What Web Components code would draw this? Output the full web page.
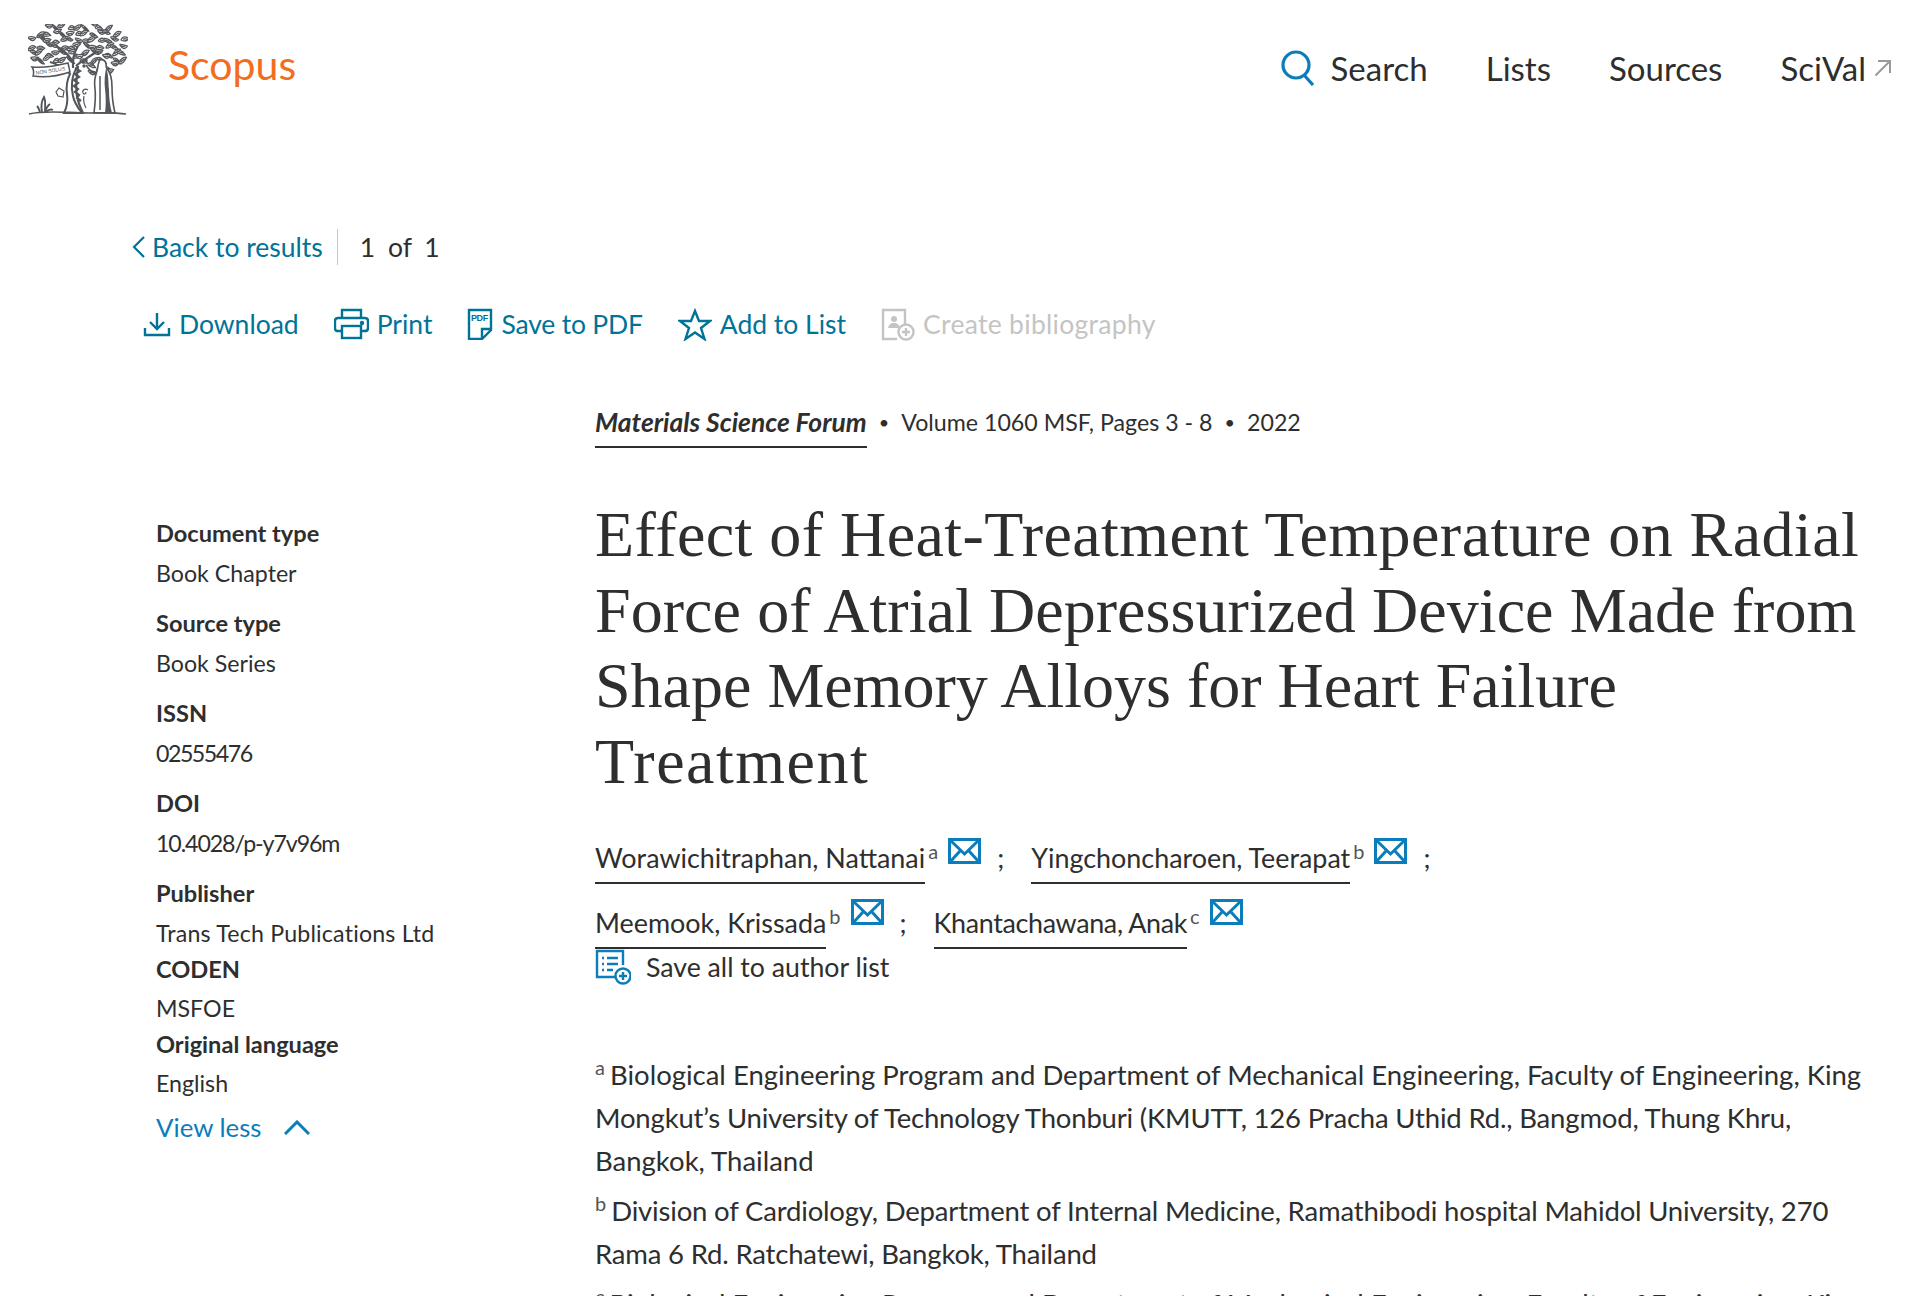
<!DOCTYPE html>
<html lang="en">
<head>
<meta charset="utf-8">
<title>Scopus - Document details</title>
<style>
    html, body { margin: 0; padding: 0; background: #fff; height: 1296px; overflow: hidden; }
    body { font-family: "Lato", "Open Sans", sans-serif; color: #2e2e2e; }
</style>
</head>
<body>
<scopus-page></scopus-page>

<template id="scopus-header-tpl">
    <style>
        :host { display: flex; justify-content: space-between; align-items: flex-start; height: 200px; }
        .brand { display: flex; align-items: flex-start; }
        .tree { width: 100px; height: 92px; margin: 24px 0 0 28px; }
        .name { color: #f36d21; font-size: 41px; line-height: 48px; margin: 41px 0 0 40px; }
        nav { display: flex; gap: 58px; align-items: center; margin: 45px 32px 0 0; font-size: 33px; line-height: 46px; color: #2e2e2e; }
        .item { display: flex; align-items: center; }
        .search svg { width: 36px; height: 36px; margin-right: 15px; }
        .ext { width: 18px; height: 18px; margin-left: 8px; }
    </style>
    <div class="brand">
        <svg class="tree" viewBox="0 0 100 92" fill="none" stroke="#53565a">
            <g class="leaves" stroke-width="1.3"></g>
            <path d="M50 42c-7 9-7 22-5 30 1 6 5 12 9 17H36c3-6 4-12 3-19-1-7 0-14 3-20l-6-6" fill="#fff" stroke-width="2"/>
            <path d="M50 42c-1 10-3 20-1 30 1 6 3 11 6 17M47 44l5 3-5 3 4 3-5 3 4 3-4 3 4 3-3 3 4 3-2 3 4 3" stroke-width="2.2"/>
            <path d="M40 48c-5-4-10-8-18-10M45 44c0-8 0-14 5-22M48 42c5-5 12-8 20-14M46 40c-4-8-10-14-18-18" stroke-width="2.2"/>
            <path d="M4 43c12 1 24-1 36-4l2 9c-12 4-25 6-37 4 1-3 1-6-1-9z" fill="#fff" stroke-width="1.5"/>
            <path d="M72 36c3-1 6 1 6 4 0 2 0 3 1 5 4 4 5 11 5 18 0 9 1 18 3 26H66c1-8 2-16 1-24-1-7 0-13 2-18 1-3 1-9 3-11z" fill="#fff" stroke-width="1.6"/>
            <path d="M78 44c3 7 2 14 3 22 0 8 1 16 3 23h-7c1-8 1-16 0-24-1-8 0-15 1-21z" fill="#53565a" stroke="none"/>
            <path d="M69 50c-4-1-8-4-11-9M72 52v34" stroke-width="1.5"/>
            <circle cx="55" cy="38" r="1.700" fill="#53565a" stroke="none"/>
            <circle cx="58" cy="36" r="1.700" fill="#53565a" stroke="none"/>
            <circle cx="56" cy="42" r="1.700" fill="#53565a" stroke="none"/>
            <path d="M60 66c-3-2-6 0-5 3 1 2 3 1 3-1M56 72c-1 4 0 8 2 12" stroke-width="1.2"/>
            <path d="M31 64l5 3-1 6-5-1-2-4z" fill="#fff" stroke-width="1.2"/>
            <path d="M1 90c8-2 15-2 24-2 10 0 24 1 36 1 12 0 24-1 37 1" stroke-width="1.700"/>
            <path d="M14 88c-1-5-1-10 2-15 2 4 1 10 1 15M17 88c1-3 2-6 5-8M12 88c-1-2-1-4-3-6M18 88c2-2 5-3 7-2" stroke-width="1.9"/>
            <text x="8" y="50.500" font-family="Liberation Sans, sans-serif" font-size="5" fill="#53565a" stroke="none" transform="rotate(-8 8 50)">NON SOLUS</text>
        </svg>
        <div class="name">Scopus</div>
    </div>
    <nav>
        <div class="item search">
            <svg viewBox="0 0 36 36" fill="none" stroke="#0c7dbb" stroke-width="3.2"><circle cx="16" cy="15" r="13"/><path d="M24 25l9 10"/></svg>
            Search
        </div>
        <div class="item">Lists</div>
        <div class="item">Sources</div>
        <div class="item">SciVal<svg class="ext" viewBox="0 0 18 18" fill="none" stroke="#9a9a9a" stroke-width="2"><path d="M1.5 16.500L16 2M4 2h12v12"/></svg></div>
    </nav>
</template>

<template id="scopus-link-tpl">
    <style>
        :host { display: inline-flex; align-items: center; color: #007398; font-size: 26.5px; line-height: 40px; white-space: nowrap; }
        :host([disabled]) { color: #c4c4c4; letter-spacing: 0.3px; }
        ::slotted(svg) { margin-right: 8px; }
    </style>
    <slot name="icon"></slot><slot></slot>
</template>

<template id="scopus-meta-tpl">
    <style>
        :host { display: block; }
        .label { font-weight: 700; font-size: 23.6px; line-height: 30px; color: #2e2e2e; }
        .value { font-size: 23.2px; line-height: 30px; color: #2e2e2e; margin-top: var(--value-gap, 10px); }
    </style>
    <div class="label"><slot name="label"></slot></div>
    <div class="value"><slot></slot></div>
</template>

<template id="scopus-author-tpl">
    <style>
        :host { display: inline-flex; align-items: flex-start; font-size: 26.9px; line-height: 40px; color: #2e2e2e; white-space: nowrap; }
        .name { border-bottom: 2px solid #2e2e2e; padding-bottom: 4px; }
        sup { display: block; font-size: 20px; line-height: 20px; margin: 3px 0 0 3px; color: #555; }
        svg { width: 33px; height: 26px; margin: var(--mail-top, 0px) 0 0 10px; }
        .sep { margin-left: 16px; margin-right: 27px; }
        :host(.last) .sep { display: none; }
    </style>
    <span class="name"><slot></slot></span><sup><slot name="aff"></slot></sup>
    <svg viewBox="0 0 33 26" fill="none" stroke="#0c7dbb" stroke-width="3"><rect x="1.500" y="1.500" width="30" height="23"/><path d="M2 2l14.500 14L31 2M2 24l10-11M31 24L21 13"/></svg>
    <span class="sep">;</span>
</template>

<template id="scopus-affil-tpl">
    <style>
        :host { display: block; font-size: 27.5px; line-height: 43px; color: #2e2e2e; margin-bottom: 7px; }
        sup { font-size: 20px; line-height: 0; vertical-align: 10px; margin-right: 5px; color: #555; }
    </style>
    <sup><slot name="mark"></slot></sup><slot></slot>
</template>

<template id="scopus-page-tpl">
    <style>
        :host { display: block; }
        .crumb { display: flex; align-items: center; padding-left: 132px; height: 40px; margin-top: 27px; }
        .crumb scopus-link { padding-right: 14px; border-right: 1px solid #c8c8c8; height: 36px; line-height: 36px; }
        .crumb svg { margin-right: 6px; }
        .count { font-size: 26.5px; padding-left: 22px; color: #2e2e2e; word-spacing: 6px; }
        .actions { display: flex; gap: 35px; padding-left: 143px; margin-top: 37px; height: 40px; }
        .layout { display: grid; grid-template-columns: 156px 439px 1fr 20px; margin-top: 60px; }
        aside { grid-column: 2; padding-top: 114px; display: flex; flex-direction: column; }
        aside .gap { margin-top: 20px; }
        aside .tight { margin-top: 6px; --value-gap: 9px; }
        main { grid-column: 3; min-width: 0; }
        .source { font-size: 23.2px; line-height: 36px; display: flex; color: #2e2e2e; }
        .source b { font-style: italic; border-bottom: 2px solid #2e2e2e; padding-bottom: 6px; font-size: 26.4px; }
        .dot { margin: 0 12px; font-size: 18px; }
        h1 { font-family: "Liberation Serif", serif; font-weight: 400; font-size: 64px; line-height: 75.5px; color: #2e2e2e; margin: 49px 0 0; }
        h1 span { display: block; white-space: nowrap; }
        .authors { margin-top: 39px; display: flex; flex-wrap: wrap; row-gap: 19px; width: 900px; }
        .second-row { --mail-top: -4px; }
        .save { display: flex; align-items: center; font-size: 26.7px; line-height: 38px; margin-top: -1px; }
        .save svg { width: 36px; height: 36px; margin-right: 15px; }
        .affils { margin-top: 67px; padding-right: 28px; }
        .tighter { letter-spacing: -0.18px; }
        .narrow-1 { letter-spacing: -1.5px; }
        .narrow-2 { letter-spacing: -1.1px; }
        .view { color: #0c7dbb; font-size: 25.8px; line-height: 40px; display: flex; align-items: center; gap: 22px; margin-top: 9px; }
        .view svg { width: 26px; height: 15px; }
    </style>
    <scopus-header></scopus-header>
    <div class="crumb">
        <scopus-link><svg slot="icon" width="14" height="24" viewBox="0 0 14 24" fill="none" stroke="#007398" stroke-width="2.2"><path d="M12 2L2 12l10 10"/></svg>Back to results</scopus-link>
        <span class="count">1 of 1</span>
    </div>
    <div class="actions">
        <scopus-link><svg slot="icon" width="28" height="26" viewBox="0 0 28 26" fill="none" stroke="#007398" stroke-width="2.4"><path d="M14 2v15M7 11l7 7 7-7M2 17v7h24v-7"/></svg>Download</scopus-link>
        <scopus-link><svg slot="icon" width="35" height="32" viewBox="0 0 35 32" fill="none" stroke="#007398" stroke-width="2.4"><path d="M8 10V2h19v8M7 23H4c-2 0-3-1-3-3v-7c0-2 1-3 3-3h27c2 0 3 1 3 3v7c0 2-1 3-3 3h-3"/><rect x="8" y="18" width="19" height="12"/><circle cx="28" cy="15" r="1" fill="#007398"/></svg>Print</scopus-link>
        <scopus-link style="letter-spacing:-.2px"><svg slot="icon" width="26" height="32" viewBox="0 0 26 32" fill="none" stroke="#007398" stroke-width="2.4"><path d="M2 31V2h22v20l-9 9H2zM15 30v-9h8"/><text x="4" y="13" font-family="Liberation Sans, sans-serif" font-size="9" font-weight="700" letter-spacing="-.4" fill="#007398" stroke="none">PDF</text></svg>Save to PDF</scopus-link>
        <scopus-link><svg slot="icon" width="34" height="33" viewBox="0 0 34 33" fill="none" stroke="#007398" stroke-width="2.4"><path d="M17 3l4 10h11l-9 7 3.500 11L17 24.500 7.500 31 11 20l-9-7h11z"/></svg>Add to List</scopus-link>
        <scopus-link disabled><svg slot="icon" width="34" height="33" viewBox="0 0 34 33" fill="none" stroke="#c4c4c4" stroke-width="2.4"><path d="M16 31H2V2h22v15"/><circle cx="13" cy="11" r="3" fill="#c4c4c4" stroke="none"/><path d="M7 20c1-4 3-5 6-5s5 1 6 5z" fill="#c4c4c4" stroke="none"/><circle cx="25" cy="24" r="7.500"/><path d="M25 20v8M21 24h8"/></svg>Create bibliography</scopus-link>
    </div>
    <div class="layout">
        <aside>
            <scopus-meta><span slot="label">Document type</span>Book Chapter</scopus-meta>
            <scopus-meta class="gap"><span slot="label">Source type</span>Book Series</scopus-meta>
            <scopus-meta class="gap"><span slot="label">ISSN</span><span class="narrow-1">02555476</span></scopus-meta>
            <scopus-meta class="gap"><span slot="label">DOI</span><span class="narrow-2">10.4028/p-y7v96m</span></scopus-meta>
            <scopus-meta class="gap"><span slot="label">Publisher</span><span style="letter-spacing:.18px">Trans Tech Publications Ltd</span></scopus-meta>
            <scopus-meta class="tight"><span slot="label">CODEN</span>MSFOE</scopus-meta>
            <scopus-meta class="tight"><span slot="label">Original language</span>English</scopus-meta>
            <div class="view">View less <svg viewBox="0 0 26 15" fill="none" stroke="#0c7dbb" stroke-width="3"><path d="M1 14L13 2l12 12"/></svg></div>
        </aside>
        <main>
            <div class="source"><b>Materials Science Forum</b><span class="dot">•</span>Volume 1060 MSF, Pages 3 - 8<span class="dot">•</span>2022</div>
            <h1><span style="letter-spacing:.45px">Effect of Heat-Treatment Temperature on Radial</span> <span style="letter-spacing:.07px">Force of Atrial Depressurized Device Made from</span> <span>Shape Memory Alloys for Heart Failure</span> <span style="letter-spacing:1.500px">Treatment</span></h1>
            <div class="authors">
                <scopus-author>Worawichitraphan, Nattanai<span slot="aff">a</span></scopus-author>
                <scopus-author>Yingchoncharoen, Teerapat<span slot="aff">b</span></scopus-author>
                <scopus-author class="second-row">Meemook, Krissada<span slot="aff">b</span></scopus-author>
                <scopus-author class="last second-row"><span style="letter-spacing:-.35px">Khantachawana, Anak</span><span slot="aff">c</span></scopus-author>
            </div>
            <div class="save"><svg viewBox="0 0 36 36" fill="none" stroke="#0c7dbb" stroke-width="2.4"><path d="M20 28H2V2h26v14"/><path d="M7 9h2M12 9h11M7 15h2M12 15h11M7 21h2M12 21h6" stroke-width="2.6"/><circle cx="28" cy="27" r="7.500"/><path d="M28 23v8M24 27h8"/></svg>Save all to author list</div>
            <div class="affils">
                <scopus-affil><span slot="mark">a</span>Biological Engineering Program and Department of Mechanical Engineering, Faculty of Engineering, King <span class="tighter">Mongkut’s University of Technology Thonburi (KMUTT, 126 Pracha Uthid Rd., Bangmod, Thung Khru,</span> Bangkok, Thailand</scopus-affil>
                <scopus-affil><span slot="mark">b</span><span class="tighter">Division of Cardiology, Department of Internal Medicine, Ramathibodi hospital Mahidol University, 270 Rama 6 Rd. Ratchatewi, Bangkok, Thailand</span></scopus-affil>
                <scopus-affil><span slot="mark">c</span>Biological Engineering Program and Department of Mechanical Engineering, Faculty of Engineering, King</scopus-affil>
            </div>
        </main>
    </div>
</template>

<script>
    // small helper so every element is the same few lines
    function define (name, tplId, setup) {
        customElements.define(name, class extends HTMLElement {
            constructor () {
                super()
                this.attachShadow({ mode: 'open' })
                    .appendChild(document.getElementById(tplId).content.cloneNode(true))
                if (setup) setup(this.shadowRoot)
            }
        })
    }

    // the canopy of the logo is just a lot of small leaves inside an ellipse
    function drawLeaves (root) {
        let d = ''
        let i = 0
        for (let y = 3; y < 52; y += 6.5) {
            for (let x = 5; x < 98; x += 7.5) {
                i++
                const dx = (x - 50) / 48
                const dy = (y - 26) / 27
                if (dx * dx + dy * dy > 1.12) continue
                if (y > 38 && x > 34 && x < 62) continue
                if (y > 38 && x < 30) continue
                const px = x + Math.sin(i * 2.3) * 1.8
                const py = y + Math.cos(i * 1.7) * 1.6
                const a = Math.sin(i * 1.3) * 3.5
                const b = Math.cos(i * 3.1) * 3.5
                d += `<path fill="#fff" d="M${px - 4} ${py + a}Q${px - 1} ${py - 4} ${px + 4} ${py + b}Q${px + 1} ${py + 4} ${px - 4} ${py + a}M${px - 2} ${py + a / 2}L${px + 2} ${py + b / 2}"/>`
            }
        }
        root.querySelector('.leaves').innerHTML = d
    }

    define('scopus-link', 'scopus-link-tpl')
    define('scopus-meta', 'scopus-meta-tpl')
    define('scopus-author', 'scopus-author-tpl')
    define('scopus-affil', 'scopus-affil-tpl')
    define('scopus-header', 'scopus-header-tpl', drawLeaves)
    define('scopus-page', 'scopus-page-tpl')
</script>
</body>
</html>
